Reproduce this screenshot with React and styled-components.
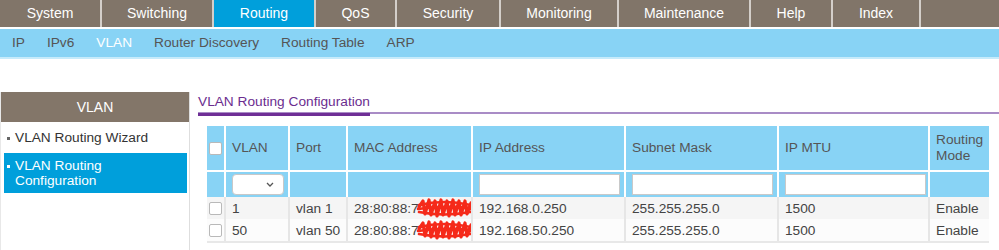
import React from 'react'
import styled, { createGlobalStyle } from 'styled-components'

const GlobalStyle = createGlobalStyle`
    body {
        margin: 0;
        background: #fff;
        font-family: "Liberation Sans", Arial, sans-serif;
    }
`;

const Container = styled.div`
    width: 999px;
    height: 250px;
    overflow: hidden;
`;

const TopNav = styled.div`
    display: flex;
    height: 27px;
    background-color: #817569;
    border-bottom: 2px solid #fff;
`;

const Tab = styled.div`
    width: ${(props) => props.w ? props.w + "px" : "auto"};
    flex: ${(props) => props.w ? "none" : 1};
    height: 27px;
    line-height: 27px;
    text-align: center;
    color: #fff;
    font-size: 14px;
    background-color: ${(props) => props.active ? "#009fdb" : "#817569"};
    border-right: ${(props) => props.w ? "2px solid #d4cfca" : "none"};
`;

const SubNav = styled.div`
    display: flex;
    height: 28px;
    padding-left: 1px;
    background-color: #88d3f5;
    border-bottom: 2px solid #c6ebfb;
`;

const SubItem = styled.div`
    padding: 0 11px;
    line-height: 28px;
    font-size: 13.7px;
    color: ${(props) => props.active ? "#fff" : "#555"};
`;

const Main = styled.div`
    display: flex;
    margin-top: 33px;
`;

const Sidebar = styled.div`
    width: 190px;
    min-height: 170px;
    border-left: 1px solid #e8e8e8;
    border-right: 1px solid #dedede;
    box-sizing: border-box;
`;

const SideHeader = styled.div`
    height: 30px;
    line-height: 30px;
    text-align: center;
    color: #fff;
    font-size: 14px;
    background-color: #837669;
`;

const SideItem = styled.div`
    display: flex;
    gap: 5px;
    margin: 2px 2px 0 3px;
    padding: ${(props) => props.active ? "5px 0 5px 3px" : "6px 0 6px 3px"};
    font-size: 13.7px;
    line-height: 15px;
    color: ${(props) => props.active ? "#fff" : "#333"};
    background-color: ${(props) => props.active ? "#009fdb" : "transparent"};
`;

const Bullet = styled.span`
    flex: none;
    width: 3px;
    height: 3px;
    margin-top: 7px;
    background-color: ${(props) => props.light ? "#fff" : "#666"};
`;

const Content = styled.div`
    flex: 1;
    padding-left: 8px;
`;

const TitleBar = styled.div`
    height: 20px;
    border-bottom: 2px solid #a98cc6;
`;

const Title = styled.span`
    display: inline-block;
    height: 20px;
    line-height: 18px;
    font-size: 13.7px;
    color: #6b2d8f;
    border-bottom: 3px solid #6f2f96;
`;

const Table = styled.div`
    width: 782px;
    margin: 12px 0 0 9px;
`;

const cols = "17px 64px 58px 125px 153px 153px 151px 61px";

const HeadRow = styled.div`
    display: grid;
    grid-template-columns: ${cols};
    height: ${(props) => props.h}px;
    background-color: #88d3f5;
    border-bottom: ${(props) => props.sep ? "2px solid #fff" : "none"};
`;

const HeadCell = styled.div`
    display: flex;
    align-items: center;
    padding-left: ${(props) => props.first ? "2px" : "6px"};
    border-left: ${(props) => props.first ? "none" : "2px solid #fff"};
    font-size: 13.7px;
    line-height: 16px;
    color: #555;
`;

const DataRow = styled.div`
    display: grid;
    grid-template-columns: ${cols};
    height: 22px;
    background-color: ${(props) => props.odd ? "#f5f5f5" : "#fcfcfc"};
    border-bottom: ${(props) => props.last ? "2px solid #e8e8e8" : "none"};
`;

const Cell = styled.div`
    display: flex;
    align-items: center;
    white-space: nowrap;
    overflow: hidden;
    padding-left: ${(props) => props.first ? "2px" : "6px"};
    border-left: ${(props) => props.first ? "none" : "2px solid #e6e6e6"};
    font-size: 13.7px;
    color: #444;
`;

const Check = styled.span`
    display: inline-block;
    width: 11px;
    height: 11px;
    border: 1px solid #b9b9b9;
    border-radius: 2px;
    background-color: #fff;
`;

const SelectBox = styled.div`
    position: relative;
    width: 50px;
    height: 19px;
    border: 1px solid #c8c8c8;
    border-radius: 4px;
    background-color: #fff;
`;

const Chevron = styled.svg`
    position: absolute;
    right: 9px;
    top: 7px;
`;

const TextInput = styled.input`
    width: 141px;
    height: 21px;
    box-sizing: border-box;
    border: 1px solid #c9c9c9;
    background-color: #fff;
    margin: 0;
    padding: 0 3px;
    outline: none;
`;

const Scribble = styled.svg`
    flex: none;
    margin-left: -3px;
`;

const tabs = [
    ["System", 100], ["Switching", 110], ["Routing", 100], ["QoS", 79],
    ["Security", 102], ["Monitoring", 116], ["Maintenance", 130], ["Help", 80],
    ["Index", 86], ["", 0],
];

const subs = ["IP", "IPv6", "VLAN", "Router Discovery", "Routing Table", "ARP"];

const rows = [
    { vlan: "1", port: "vlan 1", ip: "192.168.0.250" },
    { vlan: "50", port: "vlan 50", ip: "192.168.50.250" },
];

const Redacted = () => (
    <Scribble width="58" height="20" viewBox="0 0 58 20">
        <path
            d="M3 9 L7 3 L9 16 L13 2 L15 17 L19 3 L21 18 L25 2 L27 17 L31 3 L33 18 L37 2 L39 17 L43 3 L45 17 L49 3 L51 16 L55 5 L56 12"
            fill="none" stroke="#f52a1a" strokeWidth="3.2" strokeLinejoin="round" strokeLinecap="round" />
        <path d="M3 7 Q 28 1 55 7 M2 11 Q 28 7 56 10 M3 14 Q 28 19 54 14"
            fill="none" stroke="#f52a1a" strokeWidth="2.6" strokeLinecap="round" />
    </Scribble>
);

const App = () => {
    return (
        <Container>
            <GlobalStyle />
            <TopNav>
                {tabs.map(([name, w]) => (
                    <Tab key={name || "rest"} w={w} active={name === "Routing"}>{name}</Tab>
                ))}
            </TopNav>
            <SubNav>
                {subs.map((s) => (
                    <SubItem key={s} active={s === "VLAN"}>{s}</SubItem>
                ))}
            </SubNav>

            <Main>
                <Sidebar>
                    <SideHeader>VLAN</SideHeader>
                    <SideItem><Bullet />VLAN Routing Wizard</SideItem>
                    <SideItem active><Bullet light /><span>VLAN Routing<br />Configuration</span></SideItem>
                </Sidebar>

                <Content>
                    <TitleBar>
                        <Title>VLAN Routing Configuration</Title>
                    </TitleBar>

                    <Table>
                        <HeadRow h={44} sep>
                            <HeadCell first><Check /></HeadCell>
                            <HeadCell>VLAN</HeadCell>
                            <HeadCell>Port</HeadCell>
                            <HeadCell>MAC Address</HeadCell>
                            <HeadCell>IP Address</HeadCell>
                            <HeadCell>Subnet Mask</HeadCell>
                            <HeadCell>IP MTU</HeadCell>
                            <HeadCell>Routing<br />Mode</HeadCell>
                        </HeadRow>
                        <HeadRow h={25}>
                            <HeadCell first />
                            <HeadCell>
                                <SelectBox>
                                    <Chevron width="8" height="5" viewBox="0 0 8 5">
                                        <path d="M1 1 L4 4 L7 1" fill="none" stroke="#555" strokeWidth="1.3" />
                                    </Chevron>
                                </SelectBox>
                            </HeadCell>
                            <HeadCell />
                            <HeadCell />
                            <HeadCell><TextInput /></HeadCell>
                            <HeadCell><TextInput /></HeadCell>
                            <HeadCell><TextInput /></HeadCell>
                            <HeadCell />
                        </HeadRow>
                        {rows.map((r, i) => (
                            <DataRow key={r.vlan} odd={i === 0} last={i === rows.length - 1}>
                                <Cell first><Check /></Cell>
                                <Cell>{r.vlan}</Cell>
                                <Cell>{r.port}</Cell>
                                <Cell>28:80:88:7<Redacted /></Cell>
                                <Cell>{r.ip}</Cell>
                                <Cell>255.255.255.0</Cell>
                                <Cell>1500</Cell>
                                <Cell>Enable</Cell>
                            </DataRow>
                        ))}
                    </Table>
                </Content>
            </Main>
        </Container>
    )
}

export default App
